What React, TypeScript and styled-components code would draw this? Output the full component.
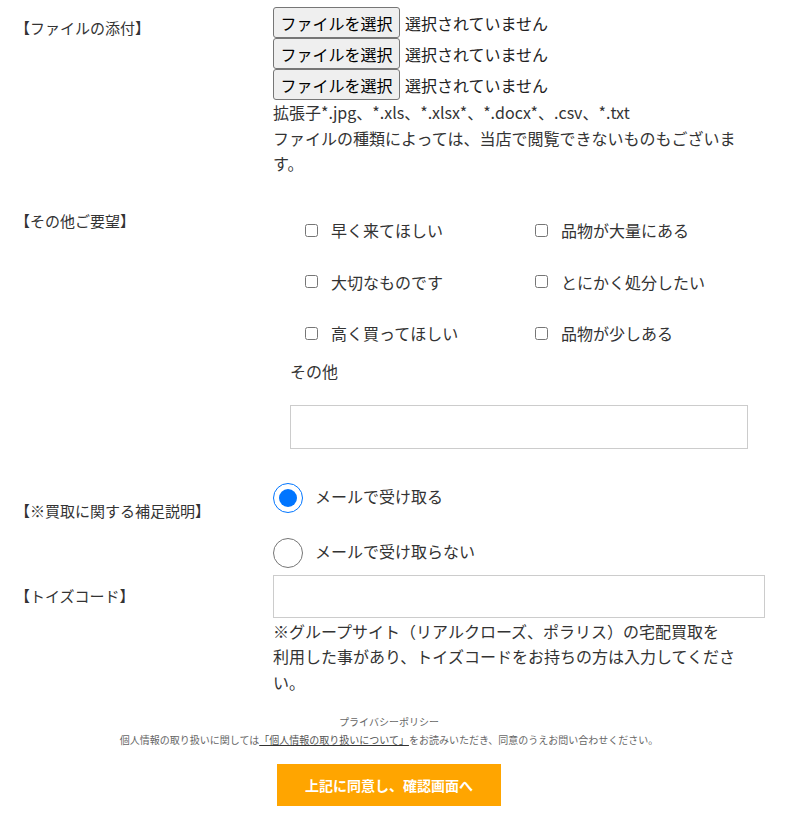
import React from "react";
import styled, { createGlobalStyle } from "styled-components";

const GlobalStyle = createGlobalStyle`
  html, body {
    margin: 0;
    padding: 0;
    background: #fff;
  }
  body {
    font-family: "Noto Sans CJK JP", "Noto Sans", sans-serif;
    color: #333;
  }
`;

const wishes = [
  "早く来てほしい",
  "品物が大量にある",
  "大切なものです",
  "とにかく処分したい",
  "高く買ってほしい",
  "品物が少しある"
];

export default function App() {
  return (
    <>
      <GlobalStyle />
      <SPage>
        <SRow top={7}>
          <SLabel pad={9}>【ファイルの添付】</SLabel>
          <div>
            {[0, 1, 2].map(i => (
              <SFileRow key={i}>
                <SFileButton type="button">ファイルを選択</SFileButton>
                <SFileName>選択されていません</SFileName>
              </SFileRow>
            ))}
            <SNote>
              拡張子*.jpg、*.xls、*.xlsx*、*.docx*、.csv、*.txt
              <br />
              ファイルの種類によっては、当店で閲覧できないものもございます。
            </SNote>
          </div>
        </SRow>

        <SRow top={20}>
          <SLabel pad={12}>【その他ご要望】</SLabel>
          <SWishes>
            <SCheckGrid>
              {wishes.map(w => (
                <SCheck key={w}>
                  <input type="checkbox" />
                  <span>{w}</span>
                </SCheck>
              ))}
            </SCheckGrid>
            <SOtherTitle>その他</SOtherTitle>
            <SOtherBox />
          </SWishes>
        </SRow>

        <SRow top={34}>
          <SLabel pad={16}>【※買取に関する補足説明】</SLabel>
          <SRadioGroup>
            <SRadio>
              <input type="radio" name="mail" defaultChecked />
              <span>メールで受け取る</span>
            </SRadio>
            <SRadio>
              <input type="radio" name="mail" />
              <span>メールで受け取らない</span>
            </SRadio>
          </SRadioGroup>
        </SRow>

        <SRow top={7}>
          <SLabel pad={9.5}>【トイズコード】</SLabel>
          <div>
            <SCodeInput type="text" />
            <SNote gap={1}>
              ※グループサイト（リアルクローズ、ポラリス）の宅配買取を
              <br />
              利用した事があり、トイズコードをお持ちの方は入力してください。
            </SNote>
          </div>
        </SRow>

        <SFooter>
          <SPolicyTitle>プライバシーポリシー</SPolicyTitle>
          <SPolicyText>
            個人情報の取り扱いに関しては
            <a href="#">「個人情報の取り扱いについて」</a>
            をお読みいただき、同意のうえお問い合わせください。
          </SPolicyText>
          <SSubmit type="button">上記に同意し、確認画面へ</SSubmit>
        </SFooter>
      </SPage>
    </>
  );
}

const SPage = styled.div`
  width: 786px;
  padding-bottom: 20px;
`;

const SRow = styled.div<{ top: number }>`
  display: grid;
  grid-template-columns: 273px 1fr;
  margin-top: ${p => p.top}px;
`;

const SLabel = styled.div<{ pad: number }>`
  padding: ${p => p.pad}px 0 0 15px;
  font-size: 15px;
  line-height: 24px;
  color: #333;
`;

const SFileRow = styled.div`
  display: flex;
  align-items: center;
  height: 31px;
`;

const SFileButton = styled.button`
  height: 31px;
  width: 127px;
  padding: 0 6px;
  margin: 0;
  background: #efefef;
  border: 1px solid #767676;
  border-radius: 3px;
  color: #000;
  font-family: inherit;
  font-size: 16px;
  line-height: 1;
`;

const SFileName = styled.span`
  margin-left: 5px;
  font-size: 16px;
  color: #222;
`;

const SNote = styled.p<{ gap?: number }>`
  margin: ${p => p.gap || 0}px 0 0;
  max-width: 472px;
  font-size: 16px;
  line-height: 25.6px;
  color: #333;
`;

const SWishes = styled.div`
  padding: 8px 0 0 17px;
`;

const SCheckGrid = styled.div`
  display: grid;
  grid-template-columns: 230px 230px;
  grid-auto-rows: 51.3px;
  align-items: center;
  padding-left: 15px;
`;

const SCheck = styled.label`
  display: flex;
  align-items: center;
  font-size: 16px;
  line-height: 24px;
  color: #333;

  input {
    width: 13px;
    height: 13px;
    margin: 0 13px 0 0;
  }
`;

const SOtherTitle = styled.div`
  font-size: 16px;
  line-height: 24px;
  color: #333;
`;

const SOtherBox = styled.div`
  box-sizing: border-box;
  width: 458px;
  height: 44px;
  margin-top: 22px;
  border: 1px solid #ccc;
  background: #fff;
`;

const SRadioGroup = styled.div`
  display: flex;
  flex-direction: column;
  gap: 25px;
`;

const SRadio = styled.label`
  display: flex;
  align-items: center;
  height: 30px;
  font-size: 16px;
  color: #333;

  input {
    width: 30px;
    height: 30px;
    margin: 0 12px 0 0;
  }

  span {
    position: relative;
    top: -2px;
  }
`;

const SCodeInput = styled.input`
  display: block;
  box-sizing: border-box;
  width: 492px;
  height: 43px;
  margin: 0;
  border: 1px solid #ccc;
  background: #fff;
  outline: none;
`;

const SFooter = styled.div`
  display: flex;
  flex-direction: column;
  align-items: center;
  padding: 18px 8px 0 0;
`;

const SPolicyTitle = styled.div`
  font-size: 10px;
  line-height: 18px;
  color: #666;
`;

const SPolicyText = styled.div`
  font-size: 10px;
  line-height: 18px;
  color: #666;

  a {
    color: #555;
    text-decoration: underline;
    text-decoration-color: #333;
  }
`;

const SSubmit = styled.button`
  width: 224px;
  height: 42px;
  margin-top: 15px;
  border: none;
  background: #ffa500;
  color: #fff;
  font-family: inherit;
  font-size: 14px;
  font-weight: 700;
`;
